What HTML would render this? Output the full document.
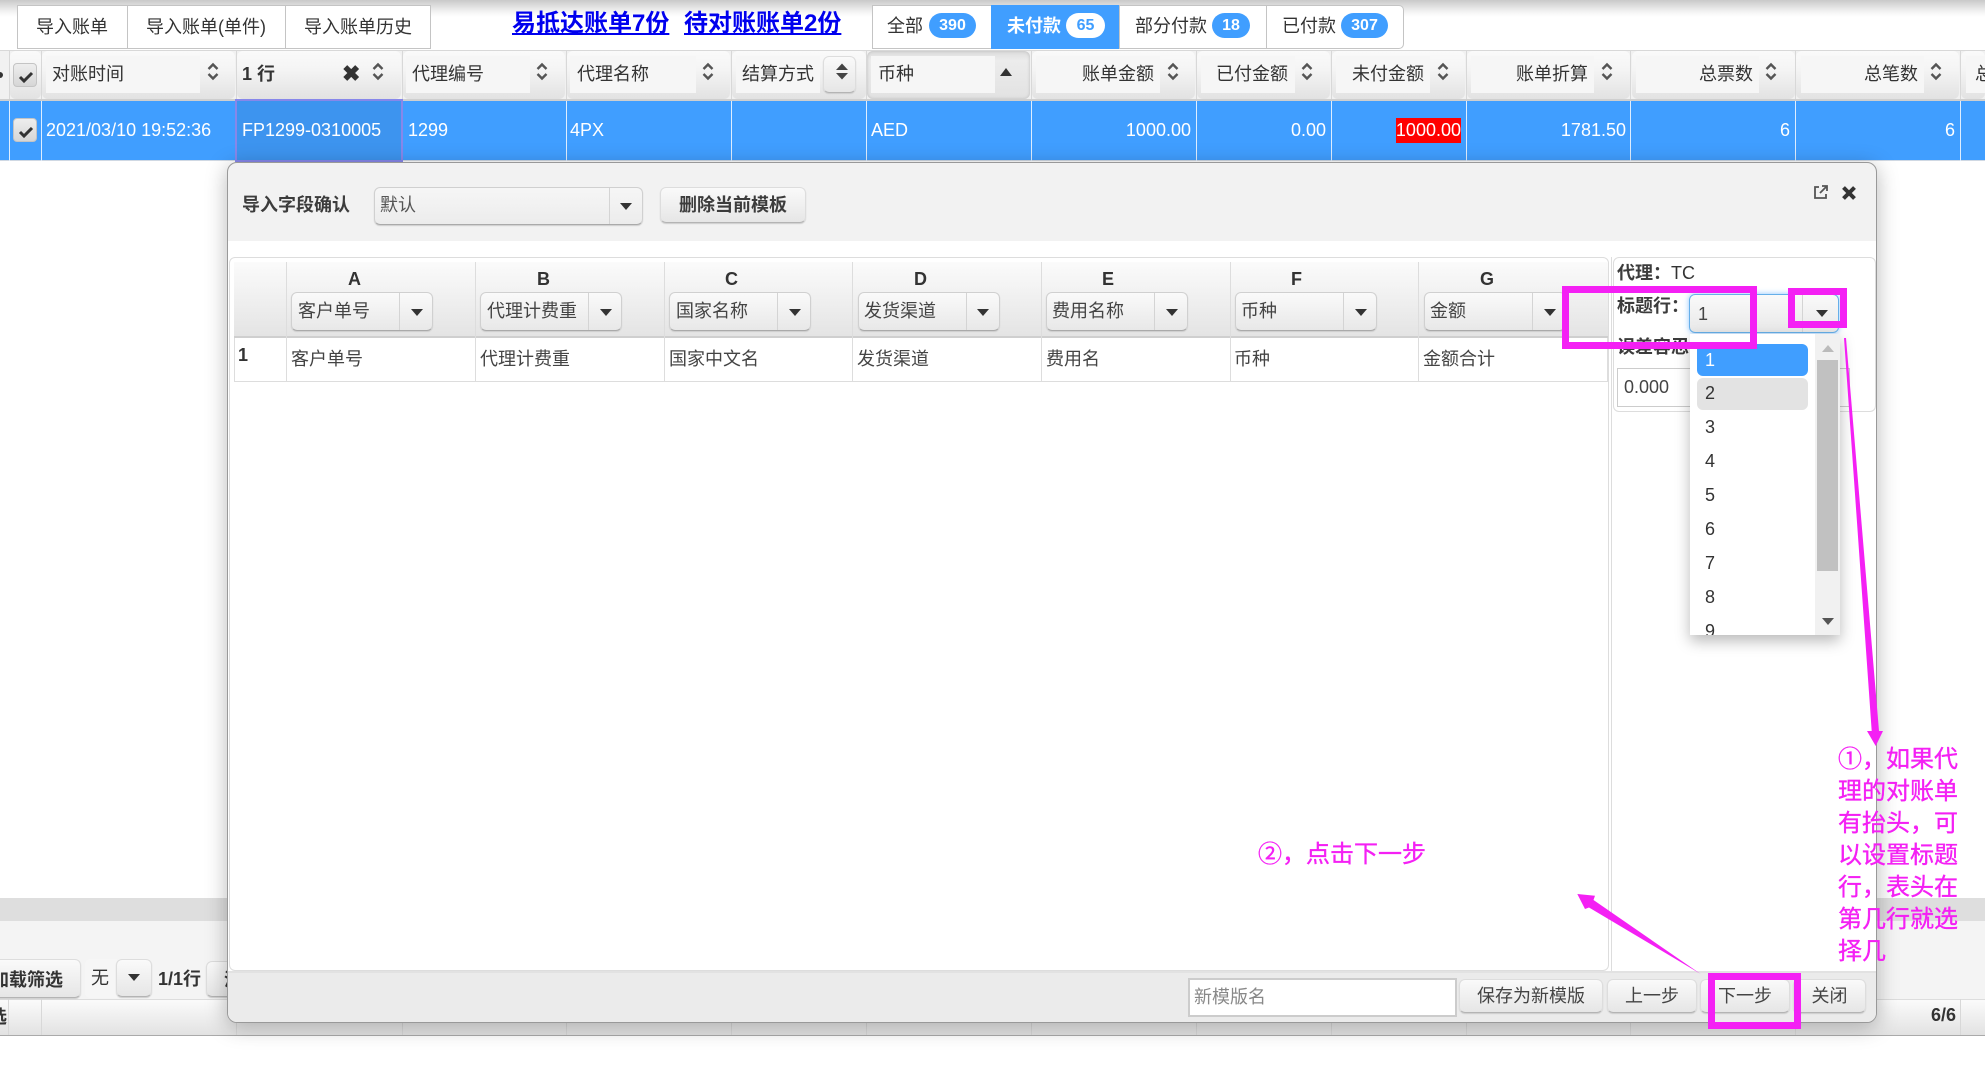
<!DOCTYPE html>
<html lang="zh-CN"><head><meta charset="utf-8"><title>导入字段确认</title>
<style>
html,body{margin:0;padding:0;width:1985px;height:1067px;overflow:hidden;background:#fff}
body{position:relative;font:18px/20px "Liberation Sans","Noto Sans CJK SC",sans-serif;color:#333}
div,a,svg{position:absolute;box-sizing:border-box}
.t{white-space:nowrap;height:20px;line-height:20px}
.b{font-weight:bold}
.r{text-align:right}
.w{color:#fff}
.tab{top:5px;height:44px;border:1px solid #c4c4c4;background:#fff}
.badge{height:25px;top:13px;border-radius:13px;background:#409eff;color:#fff;font-weight:bold;font-size:16px;line-height:25px;text-align:center}
.h{top:51px;height:48px;border-radius:6px;background:linear-gradient(#fafafa,#f4f4f4 40%,#e2e2e2)}
.bx{top:56px;height:37px;background:#f6f6f6}
.v{width:1px;background:#d8d8d8}
.vw{width:1px;background:#dfeeff;top:101px;height:60px}
.sel{border-radius:6px;border:1px solid #d0d0d0;border-bottom-color:#aaa;background:linear-gradient(#fafafa,#e8e8e8);box-shadow:0 1px 1px #ccc}
.dv{top:0;bottom:0;width:1px;background:#d4d4d4}
.c{width:0;height:0;border-left:6px solid transparent;border-right:6px solid transparent;border-top:7px solid #333}
.btn{border-radius:6px;background:linear-gradient(#fafafa,#e6e6e6);border:1px solid #ddd;border-bottom-color:#b4b4b4;box-shadow:0 1px 1px #ccc;text-align:center;color:#444}
.mg{border:7px solid #f420f4;background:transparent}
.an{color:#f420f4;font-size:24px;white-space:nowrap;-webkit-text-stroke:.35px #f420f4}
.li{left:1705px;color:#333;height:20px;line-height:20px}
</style></head><body>
<svg width="0" height="0" style="left:0;top:0"><defs><g id="s"><path d="M1.5 7 6 2.5 10.5 7M1.5 12 6 16.5 10.5 12" fill="none" stroke="#555" stroke-width="2.4"/></g></defs></svg>

<!-- top shade -->
<div style="left:0;top:0;width:1985px;height:17px;background:linear-gradient(#c9c9c9,#f4f4f4 70%,#fff)"></div>

<!-- left tabs -->
<div class="tab" style="left:17px;width:111px;background:#fff"></div>
<div class="tab" style="left:127px;width:159px"></div>
<div class="tab" style="left:285px;width:146px"></div>
<div class="t" style="left:36px;top:17px">导入账单</div>
<div class="t" style="left:146px;top:17px">导入账单(单件)</div>
<div class="t" style="left:304px;top:17px">导入账单历史</div>
<a class="t b" style="left:512px;top:10px;font-size:24px;height:28px;line-height:28px;color:#0000ee;text-decoration:underline">易抵达账单7份</a>
<a class="t b" style="left:684px;top:10px;font-size:24px;height:28px;line-height:28px;color:#0000ee;text-decoration:underline">待对账账单2份</a>

<!-- right tabs -->
<div class="tab" style="left:872px;width:120px"></div>
<div style="left:991px;top:5px;width:129px;height:44px;background:#409eff"></div>
<div class="tab" style="left:1119px;width:148px"></div>
<div class="tab" style="left:1266px;width:138px;border-radius:0 5px 5px 0"></div>
<div class="t" style="left:887px;top:16px">全部</div><div class="badge" style="left:929px;width:47px">390</div>
<div class="t b w" style="left:1007px;top:16px">未付款</div><div class="badge" style="left:1066px;width:39px;background:#fff;color:#409eff">65</div>
<div class="t" style="left:1135px;top:16px">部分付款</div><div class="badge" style="left:1212px;width:38px">18</div>
<div class="t" style="left:1282px;top:16px">已付款</div><div class="badge" style="left:1341px;width:47px">307</div>

<!-- header row -->
<div style="left:0;top:50px;width:1985px;height:51px;background:#f1f1f1;border-top:1px solid #d8d8d8;border-bottom:2px solid #cfcfcf"></div>
<div class="h" style="left:10px;width:31px"></div>
<div class="h" style="left:42px;width:193px"></div>
<div class="h" style="left:237px;width:164px"></div>
<div class="h" style="left:403px;width:162px"></div>
<div class="h" style="left:567px;width:163px"></div>
<div class="h" style="left:732px;width:134px"></div>
<div class="h" style="left:867px;width:163px;background:linear-gradient(#dcdcdc,#ececec 20%,#e2e2e2);box-shadow:inset 0 0 3px #bbb"></div>
<div class="h" style="left:1032px;width:163px"></div>
<div class="h" style="left:1197px;width:133px"></div>
<div class="h" style="left:1332px;width:133px"></div>
<div class="h" style="left:1467px;width:163px"></div>
<div class="h" style="left:1632px;width:163px"></div>
<div class="h" style="left:1796px;width:163px"></div>
<div class="h" style="left:1961px;width:24px"></div>
<div class="v" style="left:9px;top:51px;height:48px"></div><div class="v" style="left:41px;top:51px;height:48px"></div><div class="v" style="left:236px;top:51px;height:48px"></div><div class="v" style="left:402px;top:51px;height:48px"></div><div class="v" style="left:566px;top:51px;height:48px"></div><div class="v" style="left:731px;top:51px;height:48px"></div><div class="v" style="left:866px;top:51px;height:48px"></div><div class="v" style="left:1031px;top:51px;height:48px"></div><div class="v" style="left:1196px;top:51px;height:48px"></div><div class="v" style="left:1331px;top:51px;height:48px"></div><div class="v" style="left:1466px;top:51px;height:48px"></div><div class="v" style="left:1630px;top:51px;height:48px"></div><div class="v" style="left:1795px;top:51px;height:48px"></div><div class="v" style="left:1960px;top:51px;height:48px"></div>

<div class="bx" style="left:46px;width:154px"></div>
<div class="bx" style="left:406px;width:124px"></div>
<div class="bx" style="left:570px;width:126px"></div>
<div class="bx" style="left:736px;width:84px"></div>
<div class="btn" style="left:823px;top:56px;width:33px;height:37px"></div>
<div class="bx" style="left:871px;width:124px"></div>
<div class="bx" style="left:1036px;width:124px"></div>
<div class="bx" style="left:1201px;width:94px"></div>
<div class="bx" style="left:1336px;width:94px"></div>
<div class="bx" style="left:1471px;width:123px"></div>
<div class="bx" style="left:1636px;width:123px"></div>
<div class="bx" style="left:1801px;width:123px"></div>
<div class="bx" style="left:1966px;width:19px"></div>

<div class="t" style="left:52px;top:64px">对账时间</div>
<div class="t b" style="left:242px;top:64px">1 行</div>
<div class="t b" style="left:342px;top:64px;font-size:22px">✖</div>
<div class="t" style="left:412px;top:64px">代理编号</div>
<div class="t" style="left:577px;top:64px">代理名称</div>
<div class="t" style="left:742px;top:64px">结算方式</div>
<div class="t" style="left:878px;top:64px">币种</div>
<div class="t" style="left:1082px;top:64px">账单金额</div>
<div class="t" style="left:1216px;top:64px">已付金额</div>
<div class="t" style="left:1352px;top:64px">未付金额</div>
<div class="t" style="left:1516px;top:64px">账单折算</div>
<div class="t" style="left:1699px;top:64px">总票数</div>
<div class="t" style="left:1864px;top:64px">总笔数</div>
<div class="t" style="left:1975px;top:64px">总</div>

<svg width="12" height="19" style="left:207px;top:62px"><use href="#s"/></svg>
<svg width="12" height="19" style="left:372px;top:62px"><use href="#s"/></svg>
<svg width="12" height="19" style="left:536px;top:62px"><use href="#s"/></svg>
<svg width="12" height="19" style="left:702px;top:62px"><use href="#s"/></svg>
<svg width="14" height="21" style="left:835px;top:61px"><path d="M1 9 7 2.5 13 9ZM1 12 7 18.5 13 12Z" fill="#444"/></svg>
<svg width="12" height="8" style="left:1000px;top:68px"><path d="M0 8 6 0 12 8Z" fill="#333"/></svg>
<svg width="12" height="19" style="left:1167px;top:62px"><use href="#s"/></svg>
<svg width="12" height="19" style="left:1301px;top:62px"><use href="#s"/></svg>
<svg width="12" height="19" style="left:1437px;top:62px"><use href="#s"/></svg>
<svg width="12" height="19" style="left:1601px;top:62px"><use href="#s"/></svg>
<svg width="12" height="19" style="left:1765px;top:62px"><use href="#s"/></svg>
<svg width="12" height="19" style="left:1930px;top:62px"><use href="#s"/></svg>
<div style="left:0;top:72px;width:3px;height:6px;background:#333;border-radius:0 3px 3px 0"></div>

<div style="left:13px;top:63px;width:24px;height:24px;border-radius:4px;border:1px solid #c4c4c4;background:linear-gradient(#eee,#d6d6d6)"></div>
<svg width="18" height="16" style="left:17px;top:69px"><path d="M3 8 7 12 15 4" fill="none" stroke="#333" stroke-width="3"/></svg>

<!-- selected row -->
<div style="left:0;top:101px;width:1985px;height:60px;background:#409eff;border-bottom:1px solid #cfd8e3"></div>
<div class="vw" style="left:9px"></div><div class="vw" style="left:41px"></div><div class="vw" style="left:566px"></div><div class="vw" style="left:731px"></div><div class="vw" style="left:866px"></div><div class="vw" style="left:1031px"></div><div class="vw" style="left:1196px"></div><div class="vw" style="left:1331px"></div><div class="vw" style="left:1466px"></div><div class="vw" style="left:1630px"></div><div class="vw" style="left:1795px"></div><div class="vw" style="left:1960px"></div>
<div style="left:235px;top:99px;width:168px;height:63px;background:#3d94ef;border:2px solid #8787ea"></div>
<div style="left:13px;top:118px;width:24px;height:24px;border-radius:4px;border:1px solid #c4c4c4;background:linear-gradient(#eee,#d6d6d6)"></div>
<svg width="18" height="16" style="left:17px;top:124px"><path d="M3 8 7 12 15 4" fill="none" stroke="#333" stroke-width="3"/></svg>
<div class="t w" style="left:46px;top:120px">2021/03/10 19:52:36</div>
<div class="t w" style="left:242px;top:120px">FP1299-0310005</div>
<div class="t w" style="left:408px;top:120px">1299</div>
<div class="t w" style="left:570px;top:120px">4PX</div>
<div class="t w" style="left:871px;top:120px">AED</div>
<div class="t w r" style="left:1091px;width:100px;top:120px">1000.00</div>
<div class="t w r" style="left:1226px;width:100px;top:120px">0.00</div>
<div style="left:1396px;top:118px;width:65px;height:25px;background:#f00"></div>
<div class="t w r" style="left:1361px;width:100px;top:120px">1000.00</div>
<div class="t w r" style="left:1526px;width:100px;top:120px">1781.50</div>
<div class="t w r" style="left:1690px;width:100px;top:120px">6</div>
<div class="t w r" style="left:1855px;width:100px;top:120px">6</div>

<!-- bottom page area -->
<div style="left:0;top:898px;width:1985px;height:23px;background:#dedede"></div>
<div style="left:0;top:921px;width:1985px;height:78px;background:#f4f4f4"></div>
<div style="left:0;top:999px;width:1985px;height:37px;background:linear-gradient(#fbfbfb,#e2e2e2);border-top:1px solid #ddd;border-bottom:1px solid #aaa"></div>
<div class="v" style="left:8px;top:999px;height:36px"></div><div class="v" style="left:41px;top:999px;height:36px"></div><div class="v" style="left:236px;top:999px;height:36px"></div><div class="v" style="left:402px;top:999px;height:36px"></div><div class="v" style="left:566px;top:999px;height:36px"></div><div class="v" style="left:731px;top:999px;height:36px"></div><div class="v" style="left:866px;top:999px;height:36px"></div><div class="v" style="left:1031px;top:999px;height:36px"></div><div class="v" style="left:1196px;top:999px;height:36px"></div><div class="v" style="left:1331px;top:999px;height:36px"></div><div class="v" style="left:1466px;top:999px;height:36px"></div><div class="v" style="left:1630px;top:999px;height:36px"></div><div class="v" style="left:1795px;top:999px;height:36px"></div><div class="v" style="left:1960px;top:999px;height:36px"></div>
<div class="t b" style="left:-11px;top:1007px">选</div>
<div class="t b" style="left:1931px;top:1005px">6/6</div>
<div class="btn" style="left:-10px;top:959px;width:91px;height:39px"></div>
<div class="t b" style="left:-9px;top:970px">加载筛选</div>
<div style="left:85px;top:959px;width:32px;height:39px;background:#f6f6f6;border-radius:5px 0 0 5px"></div>
<div class="t" style="left:91px;top:968px">无</div>
<div class="btn" style="left:116px;top:959px;width:36px;height:38px"></div>
<div class="c" style="left:128px;top:974px"></div>
<div class="t b" style="left:158px;top:969px">1/1行</div>
<div class="btn" style="left:206px;top:961px;width:60px;height:36px"></div>
<div class="t b" style="left:224px;top:970px">清</div>

<!-- dialog -->
<div style="left:227px;top:162px;width:1650px;height:861px;background:#f2f2f2;border:1px solid #999;border-radius:10px;box-shadow:0 4px 22px rgba(0,0,0,.28)"></div>
<div class="t b" style="left:242px;top:195px;color:#3c3c3c">导入字段确认</div>
<div class="sel" style="left:374px;top:187px;width:269px;height:38px;background:linear-gradient(#f6f6f6,#ececec)"><div class="dv" style="left:234px"></div></div>
<div class="t" style="left:380px;top:195px;color:#555">默认</div>
<div class="c" style="left:620px;top:203px"></div>
<div class="btn b" style="left:660px;top:187px;width:146px;height:36px;line-height:34px;color:#3c3c3c">删除当前模板</div>
<svg width="16" height="16" style="left:1813px;top:184px"><path d="M6 3H2v11h11v-4M9 2h5v5M14 2 7 9" fill="none" stroke="#555" stroke-width="1.8"/></svg>
<svg width="16" height="16" style="left:1841px;top:185px"><path d="M2.5 2.5 13.5 13.5M13.5 2.5 2.5 13.5" stroke="#333" stroke-width="4"/></svg>

<!-- white content -->
<div style="left:228px;top:241px;width:1648px;height:730px;background:#fff"></div>
<div style="left:229px;top:257px;width:1380px;height:714px;border:1px solid #ddd;border-radius:6px"></div>
<div style="left:1611px;top:257px;width:1px;height:714px;background:#ddd"></div>
<div style="left:1613px;top:257px;width:263px;height:155px;border:1px solid #ddd;border-radius:6px"></div>

<!-- mapping table -->
<div style="left:234px;top:262px;width:1374px;height:120px;border:1px solid #ddd;border-top:0"></div>
<div style="left:234px;top:262px;width:1374px;height:76px;background:linear-gradient(#fbfbfb,#e4e4e4);border-bottom:2px solid #cfcfcf"></div>
<div class="v" style="left:286px;top:262px;height:119px;background:#ddd"></div><div class="v" style="left:475px;top:262px;height:119px;background:#ddd"></div><div class="v" style="left:664px;top:262px;height:119px;background:#ddd"></div><div class="v" style="left:852px;top:262px;height:119px;background:#ddd"></div><div class="v" style="left:1041px;top:262px;height:119px;background:#ddd"></div><div class="v" style="left:1230px;top:262px;height:119px;background:#ddd"></div><div class="v" style="left:1418px;top:262px;height:119px;background:#ddd"></div>

<div class="t b" style="left:348px;top:269px">A</div>
<div class="t b" style="left:537px;top:269px">B</div>
<div class="t b" style="left:725px;top:269px">C</div>
<div class="t b" style="left:914px;top:269px">D</div>
<div class="t b" style="left:1102px;top:269px">E</div>
<div class="t b" style="left:1291px;top:269px">F</div>
<div class="t b" style="left:1480px;top:269px">G</div>

<div class="sel" style="left:291px;top:292px;width:142px;height:39px"><div class="dv" style="left:107px"></div></div>
<div class="sel" style="left:480px;top:292px;width:142px;height:39px"><div class="dv" style="left:107px"></div></div>
<div class="sel" style="left:669px;top:292px;width:142px;height:39px"><div class="dv" style="left:107px"></div></div>
<div class="sel" style="left:858px;top:292px;width:142px;height:39px"><div class="dv" style="left:107px"></div></div>
<div class="sel" style="left:1046px;top:292px;width:142px;height:39px"><div class="dv" style="left:107px"></div></div>
<div class="sel" style="left:1235px;top:292px;width:142px;height:39px"><div class="dv" style="left:107px"></div></div>
<div class="sel" style="left:1424px;top:292px;width:142px;height:39px"><div class="dv" style="left:107px"></div></div>
<div class="c" style="left:411px;top:309px"></div><div class="c" style="left:600px;top:309px"></div><div class="c" style="left:789px;top:309px"></div><div class="c" style="left:977px;top:309px"></div><div class="c" style="left:1166px;top:309px"></div><div class="c" style="left:1355px;top:309px"></div><div class="c" style="left:1544px;top:309px"></div>
<div class="t" style="left:298px;top:301px;color:#444">客户单号</div>
<div class="t" style="left:487px;top:301px;color:#444">代理计费重</div>
<div class="t" style="left:676px;top:301px;color:#444">国家名称</div>
<div class="t" style="left:864px;top:301px;color:#444">发货渠道</div>
<div class="t" style="left:1052px;top:301px;color:#444">费用名称</div>
<div class="t" style="left:1241px;top:301px;color:#444">币种</div>
<div class="t" style="left:1430px;top:301px;color:#444">金额</div>

<div class="t b" style="left:238px;top:345px">1</div>
<div class="t" style="left:291px;top:349px;color:#444">客户单号</div>
<div class="t" style="left:480px;top:349px;color:#444">代理计费重</div>
<div class="t" style="left:669px;top:349px;color:#444">国家中文名</div>
<div class="t" style="left:857px;top:349px;color:#444">发货渠道</div>
<div class="t" style="left:1046px;top:349px;color:#444">费用名</div>
<div class="t" style="left:1234px;top:349px;color:#444">币种</div>
<div class="t" style="left:1423px;top:349px;color:#444">金额合计</div>

<!-- right info -->
<div class="t b" style="left:1617px;top:263px;color:#3c3c3c">代理：</div>
<div class="t" style="left:1671px;top:263px">TC</div>
<div class="t b" style="left:1617px;top:296px;color:#3c3c3c">标题行：</div>
<div class="t b" style="left:1617px;top:337px;color:#3c3c3c">误差容忍</div>
<div style="left:1617px;top:368px;width:233px;height:39px;border:1px solid #ccc;background:#fff"></div>
<div class="t" style="left:1624px;top:377px;color:#444">0.000</div>
<div style="left:1689px;top:294px;width:150px;height:39px;border:1px solid #66afe9;border-radius:6px;background:linear-gradient(#fafafa,#e8e8e8);box-shadow:0 0 6px rgba(64,158,255,.6)"><div class="dv" style="left:112px"></div></div>
<div class="t" style="left:1698px;top:304px;color:#444">1</div>
<div class="c" style="left:1816px;top:310px"></div>

<!-- dropdown -->
<div style="left:1690px;top:334px;width:150px;height:301px;background:#fff;box-shadow:0 6px 14px rgba(0,0,0,.28);overflow:hidden">
<div style="left:125px;top:0;width:25px;height:301px;background:#f1f1f1"></div>
<div style="left:127px;top:26px;width:21px;height:211px;background:#c1c1c1"></div>
<svg width="12" height="7" style="left:132px;top:11px"><path d="M0 7 6 0 12 7Z" fill="#bbb"/></svg>
<svg width="12" height="7" style="left:132px;top:284px"><path d="M0 0 6 7 12 0Z" fill="#555"/></svg>
<div style="left:7px;top:10px;width:111px;height:32px;background:#409eff;border-radius:6px"></div>
<div style="left:7px;top:44px;width:111px;height:32px;background:#e3e3e3;border-radius:6px"></div>
<div class="t w" style="left:15px;top:16px">1</div>
<div class="t" style="left:15px;top:49px">2</div>
<div class="t" style="left:15px;top:83px">3</div>
<div class="t" style="left:15px;top:117px">4</div>
<div class="t" style="left:15px;top:151px">5</div>
<div class="t" style="left:15px;top:185px">6</div>
<div class="t" style="left:15px;top:219px">7</div>
<div class="t" style="left:15px;top:253px">8</div>
<div class="t" style="left:15px;top:287px">9</div>
</div>

<!-- footer -->
<div style="left:228px;top:971px;width:1648px;height:51px;background:#ebebeb;border-top:2px solid #e2e2e2;border-radius:0 0 9px 9px"></div>
<div style="left:1188px;top:978px;width:269px;height:39px;background:#fff;border:2px solid #ccc"></div>
<div class="t" style="left:1194px;top:987px;color:#888">新模版名</div>
<div class="btn" style="left:1459px;top:979px;width:144px;height:34px;line-height:32px">保存为新模版</div>
<div class="btn" style="left:1607px;top:979px;width:90px;height:34px;line-height:32px">上一步</div>
<div class="btn" style="left:1700px;top:979px;width:90px;height:34px;line-height:32px">下一步</div>
<div class="btn" style="left:1793px;top:979px;width:73px;height:34px;line-height:32px">关闭</div>

<!-- annotations -->
<div class="mg" style="left:1562px;top:286px;width:195px;height:63px"></div>
<div class="mg" style="left:1788px;top:288px;width:59px;height:40px"></div>
<div class="mg" style="left:1708px;top:973px;width:93px;height:56px"></div>
<svg width="1985" height="1067" style="left:0;top:0"><path d="M1844 338 1846 338 1879 731 1883 731 1875.7 746 1867 731 1871.7 731Z" fill="#f420f4"/><path d="M1700.7 974 1593.5 900 1595 895.7 1577.3 894 1585 909 1589 907.5Z" fill="#f420f4"/></svg>
<div class="an" style="left:1838px;top:744px;line-height:32px">①，如果代<br>理的对账单<br>有抬头，可<br>以设置标题<br>行，表头在<br>第几行就选<br>择几</div>
<div class="an" style="left:1258px;top:839px;line-height:32px">②，点击下一步</div>
</body></html>
